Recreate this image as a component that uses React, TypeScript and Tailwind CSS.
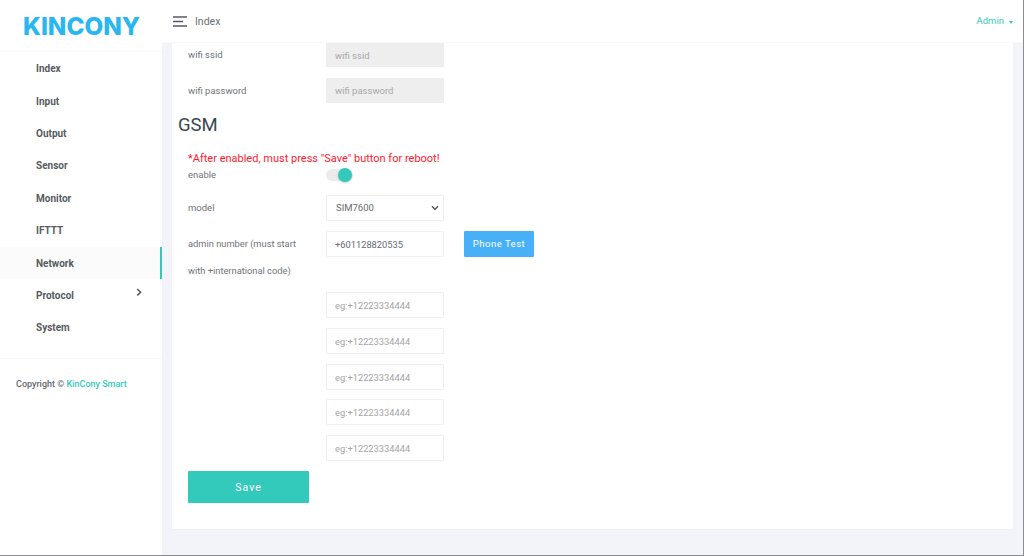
import React from "react";

const nav = ["Index", "Input", "Output", "Sensor", "Monitor", "IFTTT", "Network", "Protocol", "System"];

function Field({ placeholder, value }: { placeholder?: string; value?: string }) {
  return (
    <input
      readOnly
      placeholder={placeholder}
      value={value}
      className="h-[26px] w-[118px] rounded-[1px] border border-[#f0f0f0] bg-white px-2 pt-[1px] text-[9.3px] text-[#666b70] placeholder:text-[#a5a5a5] outline-none"
    />
  );
}

function Row({ label, children, className = "" }: { label?: React.ReactNode; children: React.ReactNode; className?: string }) {
  return (
    <div className={`flex items-center ${className}`}>
      <div className="w-[138px] shrink-0 text-[9.5px] text-[#6f7479]">{label}</div>
      {children}
    </div>
  );
}

export default function App() {
  return (
    <div
      className="flex h-[556px] w-[1024px] overflow-hidden border-r border-b border-[#8c8c90] bg-[#f3f4f9] text-[9.5px]"
      style={{ fontFamily: 'Roboto, sans-serif' }}
    >
      <aside className="flex w-[162px] shrink-0 flex-col bg-white">
        <div className="flex h-[52px] shrink-0 items-center justify-center border-b border-[#f8f8f8]">
          <svg width="162" height="51" viewBox="0 0 162 51">
            <text
              x="23"
              y="35"
              textLength="117"
              lengthAdjust="spacingAndGlyphs"
              fontSize="24.5"
              fontWeight="800"
              fontFamily="Inter, sans-serif"
              fill="#29b6f1"
            >
              KINCONY
            </text>
          </svg>
        </div>
        <nav className="flex flex-col pt-[0.5px] pb-[13.5px]">
          {nav.map((n) => (
            <div
              key={n}
              className={`relative flex h-[32.4px] items-center pl-[36px] text-[10px] font-bold text-[#565b61] ${
                n === "Network" ? "border-r-2 border-[#33cabb] bg-[#fbfbfb]" : ""
              }`}
            >
              {n}
              {n === "Protocol" && (
                <svg className="absolute left-[136px] top-[9px]" width="6" height="9" viewBox="0 0 6 9" fill="none">
                  <path d="M1.2 1 L4.6 4.2 L1.2 7.4" stroke="#565b61" strokeWidth="1.5" />
                </svg>
              )}
            </div>
          ))}
        </nav>
        <div className="border-t border-[#f8f8f8] pl-[16px] pt-[19px] text-[9px] font-medium text-[#65696e]">
          Copyright © <span className="text-[#33cabb]">KinCony Smart</span>
        </div>
      </aside>
      <div className="flex min-w-0 flex-1 flex-col">
        <header className="flex h-[43px] shrink-0 items-center justify-between border-b border-[#f8f8f8] bg-white pl-[11px] pr-[10px]">
          <div className="flex items-center">
            <svg width="14" height="11" viewBox="0 0 14 11" fill="none" stroke="#555a60" strokeWidth="1.4">
              <path d="M0 1H14M0 5.5H10M0 10H14" />
            </svg>
            <span className="ml-[8px] mt-[1px] text-[10.5px] text-[#6a6f74]">Index</span>
          </div>
          <div className="mt-[1px] flex items-center text-[9.5px] text-[#33cabb]">
            Admin
            <span className="ml-[5px] mt-[1px] h-0 w-0 border-x-[2.5px] border-t-[3px] border-x-transparent border-t-[#33cabb]" />
          </div>
        </header>
        <main className="mx-[10px] flex h-[486px] flex-col bg-white pl-[16px] shadow-[0_1px_2px_rgba(0,0,0,0.02)]">
          <Row label="wifi ssid" className="mb-[11px]">
            <input
              readOnly
              placeholder="wifi ssid"
              className="h-[24px] w-[118px] bg-[#eeeeee] px-[9px] text-[9.5px] placeholder:text-[#a8a8a8] outline-none"
            />
          </Row>
          <Row label={<span className="relative top-[1px]">wifi password</span>}>
            <input
              readOnly
              placeholder="wifi password"
              className="h-[25px] w-[118px] bg-[#eeeeee] px-[9px] text-[9.5px] placeholder:text-[#a8a8a8] outline-none"
            />
          </Row>
          <h2 className="-ml-[10px] mt-[9px] text-[18.5px] leading-[26px] text-[#3c4650]">GSM</h2>
          <div className="mt-[13px] text-[11px] leading-[16px] text-[#ff1a2e]">
            *After enabled, must press "Save" button for reboot!
          </div>
          <Row label="enable" className="mt-[-1px] h-[18px]">
            <div className="relative h-[12px] w-[27px] rounded-full bg-[#ebebeb]">
              <div className="absolute left-[12px] top-[-1px] h-[14px] w-[14px] rounded-full bg-[#33cabb] shadow-[0_1px_2px_rgba(0,0,0,0.2)]" />
            </div>
          </Row>
          <Row label="model" className="mt-[11px]">
            <div className="relative flex h-[26px] w-[118px] items-center rounded-[1px] border border-[#f0f0f0] pl-[9px] text-[9.5px] text-[#666b70]">
              SIM7600
              <svg className="absolute right-[4px] top-[9px]" width="8" height="6" viewBox="0 0 8 6" fill="none">
                <path d="M1 1.2 L4 4.2 L7 1.2" stroke="#555" strokeWidth="1.4" />
              </svg>
            </div>
          </Row>
          <div className="mt-[10px] flex">
            <div className="w-[138px] shrink-0 pr-[20px] text-[9.3px] leading-[26px] text-[#6f7479]">
              admin number (must start <span className="relative top-[0.5px]">with +international code)</span>
            </div>
            <Field value="+601128820535" />
            <button className="ml-[20px] h-[26px] w-[70px] rounded-[1px] bg-[#48b0f7] text-[9.5px] tracking-[0.5px] text-white">
              Phone Test
            </button>
          </div>
          <div className="ml-[138px] mt-[9px] flex flex-col gap-[9.75px]">
            {[0, 1, 2, 3, 4].map((i) => (
              <Field key={i} placeholder="eg:+12223334444" />
            ))}
          </div>
          <button className="mt-[10px] h-[32px] w-[121px] rounded-[1px] bg-[#33cabb] pt-[1px] text-[10.5px] tracking-[1px] text-white">
            Save
          </button>
        </main>
      </div>
    </div>
  );
}
